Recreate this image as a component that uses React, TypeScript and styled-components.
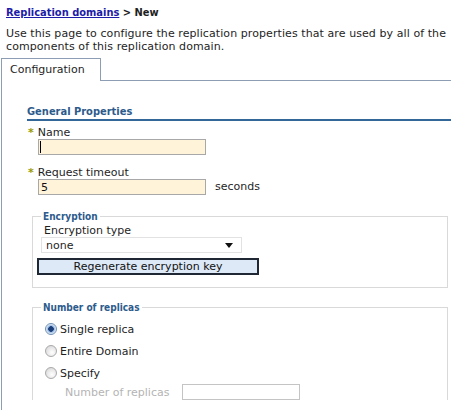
import React from 'react';
import styled, { createGlobalStyle } from 'styled-components';

const GlobalStyle = createGlobalStyle`
	html, body {
		margin: 0;
		padding: 0;
		background: #ffffff;
	}
	body {
		font-family: 'DejaVu Sans', Verdana, sans-serif;
		font-size: 11px;
		color: #1e1e1e;
	}
`;

const color = {
	link: '#1c1ca8',
	heading: '#2d5b8c',
	rule: '#336699',
	tabLine: '#8d9db4',
	required: '#9a9a00',
	inputBg: '#fff4da',
	inputBorder: '#a8a8a8',
	groupBorder: '#d9d9d9',
	muted: '#b4b4b4',
};

const boldFont = "'DejaVu Sans Condensed', Tahoma, sans-serif";

const Page = styled.div({
	width: '451px',
	height: '410px',
	overflow: 'hidden',
});

const Breadcrumb = styled.div({
	padding: '6px 0 0 6px',
	lineHeight: '13px',
	fontFamily: boldFont,
	fontWeight: 700,
	'& > a': { color: color.link, textDecoration: 'underline' },
});

const Intro = styled.p({
	margin: '8px 0 0 6px',
	lineHeight: '13px',
	whiteSpace: 'nowrap',
	letterSpacing: '0.08px',
});

const TabStrip = styled.div({
	display: 'flex',
	marginTop: '5px',
	paddingLeft: '1px',
});

const Tab = styled.div({
	width: '90px',
	height: '22px',
	boxSizing: 'content-box',
	border: `1px solid ${color.tabLine}`,
	borderBottom: 'none',
	paddingLeft: '8px',
	lineHeight: '22px',
	background: '#fff',
});

const TabFill = styled.div({
	flex: 1,
	borderBottom: `1px solid ${color.tabLine}`,
});

const Panel = styled.div({
	marginLeft: '1px',
	borderLeft: `1px solid ${color.tabLine}`,
	padding: '24px 0 0 25px',
	height: '330px',
});

const SectionTitle = styled.div({
	color: color.heading,
	fontFamily: boldFont,
	fontWeight: 700,
	lineHeight: '13px',
	paddingBottom: '1px',
	borderBottom: `2px solid ${color.rule}`,
});

const Field = styled.div<{ $first?: boolean }>(({ $first }) => ({
	marginTop: $first ? '5px' : '11px',
	paddingLeft: '1px',
}));

const Label = styled.div({
	lineHeight: '13px',
	whiteSpace: 'nowrap',
});

const Required = styled.span({
	color: color.required,
	fontWeight: 700,
	marginRight: '4px',
});

const InputRow = styled.div({
	display: 'flex',
	alignItems: 'center',
	gap: '9px',
	paddingLeft: '10px',
	position: 'relative',
});

const TextInput = styled.input({
	width: '168px',
	height: '16px',
	boxSizing: 'border-box',
	margin: 0,
	padding: '0 2px',
	border: `1px solid ${color.inputBorder}`,
	background: color.inputBg,
	font: 'inherit',
	color: '#111',
	outline: 'none',
});

const Caret = styled.span({
	position: 'absolute',
	left: '12px',
	top: '2px',
	width: '1px',
	height: '12px',
	background: '#000',
});

const Unit = styled.span({
	lineHeight: '14px',
});

const Group = styled.fieldset<{ $gap: number; $open?: boolean }>(({ $gap, $open }) => ({
	margin: `${$gap}px 3px 0 5px`,
	padding: $open ? '0 0 0 8px' : '0 0 12px 8px',
	border: `1px solid ${color.groupBorder}`,
	borderBottom: $open ? 'none' : `1px solid ${color.groupBorder}`,
	minWidth: 0,
}));

const Legend = styled.legend({
	padding: '0 2px',
	color: color.heading,
	fontFamily: boldFont,
	fontSize: '10px',
	fontWeight: 700,
	lineHeight: '13px',
});

const SmallLabel = styled.div({
	paddingLeft: '3px',
	lineHeight: '12px',
	marginTop: '2px',
});

const Select = styled.div({
	display: 'flex',
	alignItems: 'center',
	justifyContent: 'space-between',
	width: '201px',
	height: '16px',
	boxSizing: 'border-box',
	border: `1px solid #e2e2e2`,
	padding: '0 8px 0 4px',
	background: '#fff',
});

const ActionButton = styled.div({
	marginTop: '5px',
	marginLeft: '-4px',
	width: '222px',
	height: '17px',
	boxSizing: 'border-box',
	border: '2px solid #1e2733',
	background: '#dde9f7',
	textAlign: 'center',
	lineHeight: '13px',
	color: '#111',
});

const RadioList = styled.div({
	paddingTop: '4px',
});

const RadioRow = styled.label({
	display: 'flex',
	alignItems: 'center',
	height: '22px',
	paddingLeft: '4px',
	gap: '3px',
});

const Radio = styled.span<{ $checked?: boolean }>(({ $checked }) => ({
	width: '12px',
	height: '12px',
	borderRadius: '50%',
	boxSizing: 'border-box',
	border: `1px solid ${$checked ? '#6f8fb4' : '#a9a9a9'}`,
	background: $checked
		? 'radial-gradient(circle, #1d3f7a 0 2.5px, #8fb3de 3px, #e9f1fb 5px)'
		: 'radial-gradient(circle at 60% 65%, #ffffff 0, #e4e4e4 60%, #cfcfcf 100%)',
}));

const SubRow = styled.div({
	display: 'flex',
	alignItems: 'center',
	gap: '13px',
	height: '16px',
	paddingLeft: '24px',
	color: color.muted,
});

const MutedInput = styled.div({
	width: '118px',
	height: '16px',
	boxSizing: 'border-box',
	border: '1px solid #c4c4c4',
	background: '#fff',
});

const Arrow = () => (
	<svg width='8' height='5' viewBox='0 0 8 5'>
		<path d='M0 0h8L4 5z' fill='#111' />
	</svg>
);

export default function App() {
	return (
		<Page>
			<GlobalStyle />
			<Breadcrumb>
				<a href='#'>Replication domains</a> &gt; New
			</Breadcrumb>
			<Intro>
				Use this page to configure the replication properties that are used by all of the
				<br />
				components of this replication domain.
			</Intro>

			<TabStrip>
				<Tab>Configuration</Tab>
				<TabFill />
			</TabStrip>

			<Panel>
				<SectionTitle>General Properties</SectionTitle>

				<Field $first>
					<Label>
						<Required>*</Required>Name
					</Label>
					<InputRow>
						<TextInput readOnly value='' />
						<Caret />
					</InputRow>
				</Field>

				<Field>
					<Label>
						<Required>*</Required>Request timeout
					</Label>
					<InputRow>
						<TextInput readOnly value='5' />
						<Unit>seconds</Unit>
					</InputRow>
				</Field>

				<Group $gap={15}>
					<Legend>Encryption</Legend>
					<SmallLabel>Encryption type</SmallLabel>
					<Select>
						<span>none</span>
						<Arrow />
					</Select>
					<ActionButton>Regenerate encryption key</ActionButton>
				</Group>

				<Group $gap={13} $open>
					<Legend>Number of replicas</Legend>
					<RadioList>
						<RadioRow>
							<Radio $checked />
							Single replica
						</RadioRow>
						<RadioRow>
							<Radio />
							Entire Domain
						</RadioRow>
						<RadioRow>
							<Radio />
							Specify
						</RadioRow>
					</RadioList>
					<SubRow>
						<span>Number of replicas</span>
						<MutedInput />
					</SubRow>
				</Group>
			</Panel>
		</Page>
	);
}
